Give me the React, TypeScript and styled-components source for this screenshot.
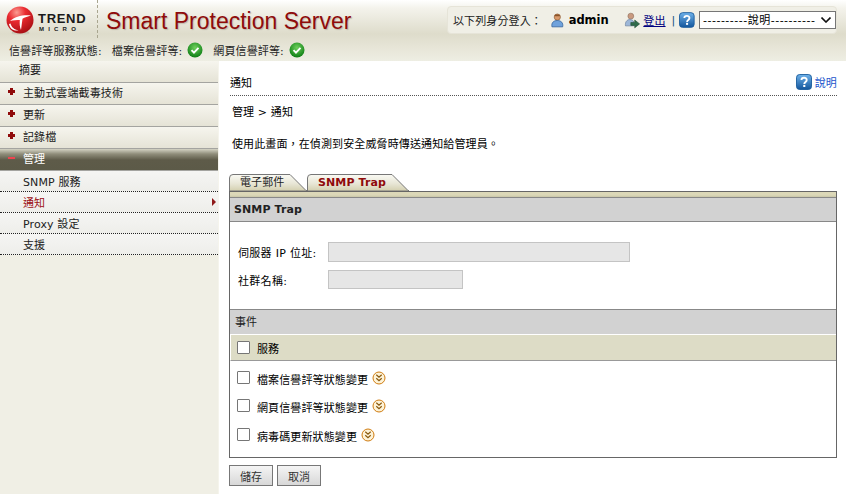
import React from "react";
import styled, { createGlobalStyle } from "styled-components";

const FONT = `"DejaVu Sans", Verdana, "Noto Sans CJK TC", sans-serif`;

const Global = createGlobalStyle`
  html, body { margin: 0; padding: 0; background: #fff; }
  body { font-family: ${FONT}; font-size: 11px; letter-spacing: 0.12px; color: #000; overflow: hidden; }
  * { box-sizing: border-box; }
`;

const Page = styled.div`
  width: 846px;
  height: 494px;
  display: flex;
  flex-direction: column;
  overflow: hidden;
`;

const Header = styled.header`
  height: 61px;
  flex: none;
  background: linear-gradient(180deg, #ffffff 0px, #f4f3ec 8px, #dedccb 34px, #e6e4d6 46px, #eeeee3 61px);
  display: flex;
  flex-direction: column;
`;

const HeaderTop = styled.div`
  height: 40px;
  display: flex;
  align-items: flex-start;
  padding-left: 6px;
`;

const Brand = styled.div`
  width: 92px;
  height: 38px;
  padding-top: 6px;
  display: flex;
  align-items: flex-start;
  border-right: 1px dashed #a9a68f;
`;

const BrandWords = styled.div`
  margin-left: 3px;
  margin-top: 6px;
  display: flex;
  flex-direction: column;
  align-items: flex-start;
  line-height: 1;
`;

const BrandTrend = styled.span`
  font-family: "Liberation Sans", sans-serif;
  font-size: 13px;
  font-weight: 700;
  letter-spacing: 0.7px;
  color: #1a1a1a;
`;

const BrandMicro = styled.span`
  font-family: "Liberation Sans", sans-serif;
  font-size: 6px;
  font-weight: 700;
  letter-spacing: 4.2px;
  color: #1a1a1a;
  margin: 1px 0 0 1px;
`;

const ProductName = styled.h1`
  margin: 9px 0 0 8px;
  font-family: "Liberation Sans", sans-serif;
  font-size: 23px;
  line-height: 24px;
  font-weight: 400;
  letter-spacing: 0;
  color: #8f0b0b;
  text-shadow: 1px 1px 1px rgba(120, 110, 90, 0.35);
  white-space: nowrap;
`;

const UserBox = styled.div`
  margin-left: auto;
  margin-right: 9px;
  margin-top: 6px;
  width: 390px;
  height: 28px;
  background: #f0efe6;
  border: 1px solid #e6e4d8;
  border-radius: 4px;
  display: flex;
  align-items: center;
  padding-left: 5px;
  font-size: 11px;
  white-space: nowrap;
`;

const Muted = styled.span`
  color: #222;
  width: 97px;
  flex: none;
`;

const UserName = styled.b`
  margin: 0 15px 0 4px;
  font-size: 11.5px;
  letter-spacing: 0;
`;

const LogoutLink = styled.a`
  color: #000080;
  text-decoration: underline;
  margin-left: 3px;
`;

const Divider = styled.span`
  margin: 0 4px 0 6px;
  color: #14517f;
`;

const SelectWrap = styled.div`
  position: relative;
  width: 137px;
  height: 18px;
  margin-left: 4px;
  flex: none;
`;

const HelpSelect = styled.select`
  width: 100%;
  height: 100%;
  appearance: none;
  padding: 0 0 0 3px;
  font-family: ${FONT};
  font-size: 11px;
  letter-spacing: 0.5px;
  background: #fff;
  border: 1px solid #767676;
  border-radius: 0;
  color: #000;
`;

const Chevron = styled.svg`
  position: absolute;
  right: 5px;
  top: 6px;
  pointer-events: none;
`;

const StatusRow = styled.div`
  height: 20px;
  display: flex;
  align-items: center;
  padding-left: 9px;
  font-size: 11px;
  color: #222;
  white-space: nowrap;
`;

const StatusLabel = styled.span<{ $gap: number; $end: number }>`
  margin-left: ${(p) => p.$gap}px;
  margin-right: ${(p) => p.$end}px;
`;

const Body = styled.div`
  flex: 1;
  display: flex;
  min-height: 0;
`;

const Sidebar = styled.nav`
  width: 219px;
  flex: none;
  background: #f0efe5;
  border-right: 1px solid #f5f4ec;
`;

const NavItem = styled.div<{ $open?: boolean; $flush?: boolean }>`
  height: 22px;
  display: flex;
  align-items: center;
  padding-left: ${(p) => (p.$flush ? 19 : 8)}px;
  padding-bottom: ${(p) => (p.$flush ? 6 : 4)}px;
  border-bottom: 1px solid #a4a4a0;
  background: ${(p) =>
    p.$open
      ? "linear-gradient(180deg,#d4d3c4 0,#8f8d7a 5px,#5e5b49 11px,#5c5a48 100%)"
      : "linear-gradient(180deg,#f6f5ee 0,#e5e3d6 100%)"};
  color: ${(p) => (p.$open ? "#fff" : "#1a1a1a")};
  font-size: 11px;
`;

const NavMark = styled.span`
  width: 15px;
  display: flex;
  flex: none;
`;

const SubItem = styled.div<{ $active?: boolean }>`
  height: 21px;
  display: flex;
  align-items: center;
  justify-content: space-between;
  padding: 0 2px 0 23px;
  background: linear-gradient(180deg, #f5f5f3 0, #eeeeea 100%);
  border-bottom: 1px dotted #222;
  color: ${(p) => (p.$active ? "#9c0f14" : "#222")};
  font-size: 11px;
`;

const Main = styled.main`
  flex: 1;
  padding: 0 9px 0 10px;
  display: flex;
  flex-direction: column;
`;

const TitleBar = styled.div`
  height: 35px;
  margin-left: 1px;
  padding-top: 13px;
  display: flex;
  align-items: flex-start;
  justify-content: space-between;
  border-bottom: 1px dotted #555;
  font-size: 11px;
`;

const HelpLink = styled.a`
  display: flex;
  align-items: center;
  gap: 3px;
  color: #2255cc;
`;

const Crumbs = styled.div`
  margin: 10px 0 0 3px;
  line-height: 14px;
`;

const Desc = styled.div`
  margin: 18px 0 0 3px;
  line-height: 14px;
`;

const Tabs = styled.div`
  margin-top: 21px;
  height: 18px;
  display: flex;
  flex: none;
`;

const Tab = styled.div<{ $active?: boolean; $w: number }>`
  position: relative;
  width: ${(p) => p.$w}px;
  height: 18px;
  flex: none;
  line-height: 19px;
  padding-left: 11px;
  font-weight: ${(p) => (p.$active ? 700 : 400)};
  color: ${(p) => (p.$active ? "#8f0b0b" : "#222")};
  z-index: ${(p) => (p.$active ? 2 : 1)};
  & > span { position: relative; }
  & > svg { position: absolute; left: 0; top: 0; }
`;

const Panel = styled.section`
  height: 267px;
  border: 1px solid #666;
  border-top: none;
  display: flex;
  flex-direction: column;
`;

const PanelCap = styled.div`
  height: 6px;
  background: linear-gradient(180deg, #dcd8b8 0, #dcd8b8 3px, #c9c6a8 100%);
  border-top: 1px solid #666;
  flex: none;
`;

const GrayHeader = styled.div`
  height: 25px;
  flex: none;
  background: #d2d2d2;
  border-top: 1px solid #888;
  border-bottom: 1px solid #888;
  display: flex;
  align-items: center;
  padding-left: 4px;
  font-weight: 700;
  color: #222;
`;

const FormArea = styled.div`
  height: 87px;
  flex: none;
  padding: 20px 0 0 8px;
  display: flex;
  flex-direction: column;
  gap: 8px;
`;

const FormRow = styled.div`
  display: flex;
  align-items: center;
`;

const FormLabel = styled.label`
  width: 90px;
  flex: none;
  letter-spacing: 0.3px;
`;

const TextBox = styled.div<{ $w: number; $h: number }>`
  width: ${(p) => p.$w}px;
  height: ${(p) => p.$h}px;
  background: #e6e6e6;
  border: 1px solid #c4c4c4;
`;

const EventHeader = styled(GrayHeader)`
  font-weight: 400;
  height: 25px;
  padding-left: 5px;
  padding-bottom: 2px;
  border-bottom: none;
`;

const ServiceRow = styled.div`
  height: 27px;
  flex: none;
  background: #dddcc6;
  border-top: 1px solid #fff;
  border-bottom: 1px solid #999;
  border-left: 1px solid #fff;
  display: flex;
  align-items: center;
  padding-left: 6px;
  gap: 7px;
`;

const EventList = styled.div`
  display: flex;
  flex-direction: column;
  padding: 10px 0 0 7px;
`;

const EventRow = styled.div<{ $h: number }>`
  height: ${(p) => p.$h}px;
  display: flex;
  align-items: flex-start;
`;

const Check = styled.span`
  width: 13px;
  height: 13px;
  flex: none;
  background: #fff;
  border: 1px solid #767676;
  border-radius: 1px;
  margin-right: 7px;
`;

const ServiceCheck = styled(Check)`
  margin-right: 0;
`;

const EventText = styled.span`
  margin-top: 3px;
  line-height: 14px;
`;

const ExpandIcon = styled.svg`
  margin-left: 4px;
`;

const Actions = styled.div`
  margin-top: 7px;
  display: flex;
  gap: 4px;
`;

const Btn = styled.button`
  width: 44px;
  height: 21px;
  padding: 0;
  font-family: ${FONT};
  font-size: 11px;
  color: #333;
  background: linear-gradient(180deg, #f4f4f4 0, #d8d8d8 100%);
  border: 1px solid #777;
  border-radius: 0;
`;

const OkIcon = () => (
  <svg width="16" height="16" viewBox="0 0 17 17">
    <defs>
      <radialGradient id="ok" cx="50%" cy="35%" r="65%">
        <stop offset="0" stopColor="#6fd05c" />
        <stop offset="1" stopColor="#0c7d14" />
      </radialGradient>
    </defs>
    <circle cx="8.5" cy="8.5" r="8" fill="url(#ok)" />
    <path d="M4.8 8.6l2.6 2.7 4.8-5" fill="none" stroke="#fff" strokeWidth="2" />
  </svg>
);

const HelpIcon = () => (
  <svg width="16" height="16" viewBox="0 0 17 17">
    <defs>
      <linearGradient id="hp" x1="0" y1="0" x2="0" y2="1">
        <stop offset="0" stopColor="#6fb2ea" />
        <stop offset="1" stopColor="#13569c" />
      </linearGradient>
    </defs>
    <rect x="0.5" y="0.5" width="16" height="16" rx="3.5" fill="url(#hp)" stroke="#1d5f9f" />
    <path d="M5.8 6.4c0-3.2 5.6-3.2 5.6 0 0 2.2-2.6 2-2.6 4.2" fill="none" stroke="#fff" strokeWidth="2" />
    <rect x="7.7" y="11.6" width="2.2" height="2.2" fill="#fff" />
  </svg>
);

const UserIcon = () => (
  <svg width="15" height="15" viewBox="0 0 15 15">
    <circle cx="7.5" cy="4" r="3.2" fill="#d99a6c" stroke="#8a5a33" strokeWidth="0.7" />
    <path d="M4.5 2.6c1-1.8 5-1.8 6 0l-1 .6h-4z" fill="#8a5429" />
    <path d="M2 14c-.8-4 1.5-6.5 5.5-6.5S13.800 10 13 14z" fill="#6fa2dc" stroke="#2f5f9a" strokeWidth="0.8" />
  </svg>
);

const LogoutIcon = () => (
  <svg width="17" height="17" viewBox="0 0 17 17">
    <circle cx="7" cy="4" r="3" fill="#c99a80" stroke="#8b6a58" strokeWidth="0.6" />
    <path d="M1.500 14c-.5-4 1.500-6.500 4.500-6.500 2 0 3.500.8 4 2.500v4z" fill="#9db7d8" stroke="#6a7f9d" strokeWidth="0.7" />
    <path d="M7 10.500h4V8l5 4-5 4v-2.500H7z" fill="#2f6b4a" stroke="#1d4a32" strokeWidth="0.6" />
  </svg>
);

const Logo = () => (
  <svg width="29" height="30" viewBox="0 0 29 30">
    <defs>
      <radialGradient id="tm" cx="38%" cy="22%" r="80%">
        <stop offset="0" stopColor="#fb9c92" />
        <stop offset="0.4" stopColor="#ea2a30" />
        <stop offset="1" stopColor="#a80f14" />
      </radialGradient>
      <linearGradient id="tmShadow" x1="0" y1="0" x2="0" y2="1">
        <stop offset="0" stopColor="#8a8570" stopOpacity="0.45" />
        <stop offset="1" stopColor="#8a8570" stopOpacity="0" />
      </linearGradient>
    </defs>
    <ellipse cx="14.500" cy="27" rx="9" ry="2.500" fill="url(#tmShadow)" />
    <circle cx="14" cy="14" r="13.500" fill="url(#tm)" />
    <path d="M4 15C9 10.500 17 8.500 25 9.500c-3 .8-6.500 2-8.500 3.300L15 24c-1.300-3-1.500-6.500-1.200-10C10.500 14 7 14.300 4 15z" fill="#fff" />
    <path d="M4.500 17.500c.8 3.800 4 6.300 8 6.700-4.500 1.300-9-1.700-9.500-6.200z" fill="#fff" />
  </svg>
);

const Plus = () => (
  <svg width="7" height="7" viewBox="0 0 7 7">
    <path d="M2 0h3v2h2v3H5v2H2V5H0V2h2z" fill="#900b0b" />
  </svg>
);

const Minus = () => (
  <svg width="7" height="7" viewBox="0 0 7 7">
    <rect x="0" y="3" width="7" height="2" fill="#ee4450" />
  </svg>
);

const Arrow = () => (
  <svg width="4" height="8" viewBox="0 0 4 8">
    <path d="M0 0l4 4-4 4z" fill="#8f1a1a" />
  </svg>
);

const Expand = () => (
  <ExpandIcon width="14" height="14" viewBox="0 0 14 14">
    <circle cx="7" cy="7" r="6" fill="#fdf3d8" stroke="#d07c10" strokeWidth="1" />
    <path d="M4.300 3.800L7 6.300l2.700-2.500M4.300 7.300L7 9.800l2.700-2.500" fill="none" stroke="#8a5a10" strokeWidth="1.200" />
  </ExpandIcon>
);

const TabShape = ({ w }: { w: number }) => (
  <svg width={w} height="18" viewBox={`0 0 ${w} 18`}>
    <defs>
      <linearGradient id={`tab${w}`} x1="0" y1="0" x2="0" y2="1">
        <stop offset="0" stopColor="#fafaf4" />
        <stop offset="0.55" stopColor="#e8e6d6" />
        <stop offset="1" stopColor="#d3cfae" />
      </linearGradient>
    </defs>
    <path
      d={`M0.500 18V5Q0.500 1.500 4 1.500H${w - 17}L${w - 1} 17.500H${w}V18z`}
      fill={`url(#tab${w})`}
      stroke="#777"
      strokeWidth="1"
    />
  </svg>
);

const events: [string, number][] = [
  ["檔案信譽評等狀態變更", 28],
  ["網頁信譽評等狀態變更", 29],
  ["病毒碼更新狀態變更", 28],
];

export default function App() {
  return (
    <Page>
      <Global />
      <Header>
        <HeaderTop>
          <Brand>
            <Logo />
            <BrandWords>
              <BrandTrend>TREND</BrandTrend>
              <BrandMicro>MICRO</BrandMicro>
            </BrandWords>
          </Brand>
          <ProductName>Smart Protection Server</ProductName>
          <UserBox>
            <Muted>以下列身分登入：</Muted>
            <UserIcon />
            <UserName>admin</UserName>
            <LogoutIcon />
            <LogoutLink>登出</LogoutLink>
            <Divider>|</Divider>
            <HelpIcon />
            <SelectWrap>
              <HelpSelect defaultValue="h">
                <option value="h">----------說明----------</option>
              </HelpSelect>
              <Chevron width="10" height="6" viewBox="0 0 10 6">
                <path d="M0.500 0.500L5 5l4.500-4.500" fill="none" stroke="#111" strokeWidth="1.600" />
              </Chevron>
            </SelectWrap>
          </UserBox>
        </HeaderTop>
        <StatusRow>
          信譽評等服務狀態:
          <StatusLabel $gap={10} $end={5}>檔案信譽評等:</StatusLabel>
          <OkIcon />
          <StatusLabel $gap={10} $end={5}>網頁信譽評等:</StatusLabel>
          <OkIcon />
        </StatusRow>
      </Header>
      <Body>
        <Sidebar>
          <NavItem $flush>摘要</NavItem>
          <NavItem><NavMark><Plus /></NavMark>主動式雲端截毒技術</NavItem>
          <NavItem><NavMark><Plus /></NavMark>更新</NavItem>
          <NavItem><NavMark><Plus /></NavMark>記錄檔</NavItem>
          <NavItem $open><NavMark><Minus /></NavMark>管理</NavItem>
          <SubItem>SNMP 服務</SubItem>
          <SubItem $active>通知<Arrow /></SubItem>
          <SubItem>Proxy 設定</SubItem>
          <SubItem>支援</SubItem>
        </Sidebar>
        <Main>
          <TitleBar>
            通知
            <HelpLink><HelpIcon />說明</HelpLink>
          </TitleBar>
          <Crumbs>管理 &gt; 通知</Crumbs>
          <Desc>使用此畫面，在偵測到安全威脅時傳送通知給管理員。</Desc>
          <Tabs>
            <Tab $w={78}><TabShape w={78} /><span>電子郵件</span></Tab>
            <Tab $active $w={102}><TabShape w={102} /><span>SNMP Trap</span></Tab>
          </Tabs>
          <Panel>
            <PanelCap />
            <GrayHeader>SNMP Trap</GrayHeader>
            <FormArea>
              <FormRow>
                <FormLabel>伺服器 IP 位址:</FormLabel>
                <TextBox $w={302} $h={20} />
              </FormRow>
              <FormRow>
                <FormLabel>社群名稱:</FormLabel>
                <TextBox $w={135} $h={19} />
              </FormRow>
            </FormArea>
            <EventHeader>事件</EventHeader>
            <ServiceRow>
              <ServiceCheck />
              服務
            </ServiceRow>
            <EventList>
              {events.map(([t, h]) => (
                <EventRow key={t} $h={h}>
                  <Check />
                  <EventText>{t}</EventText>
                  <Expand />
                </EventRow>
              ))}
            </EventList>
          </Panel>
          <Actions>
            <Btn>儲存</Btn>
            <Btn>取消</Btn>
          </Actions>
        </Main>
      </Body>
    </Page>
  );
}
